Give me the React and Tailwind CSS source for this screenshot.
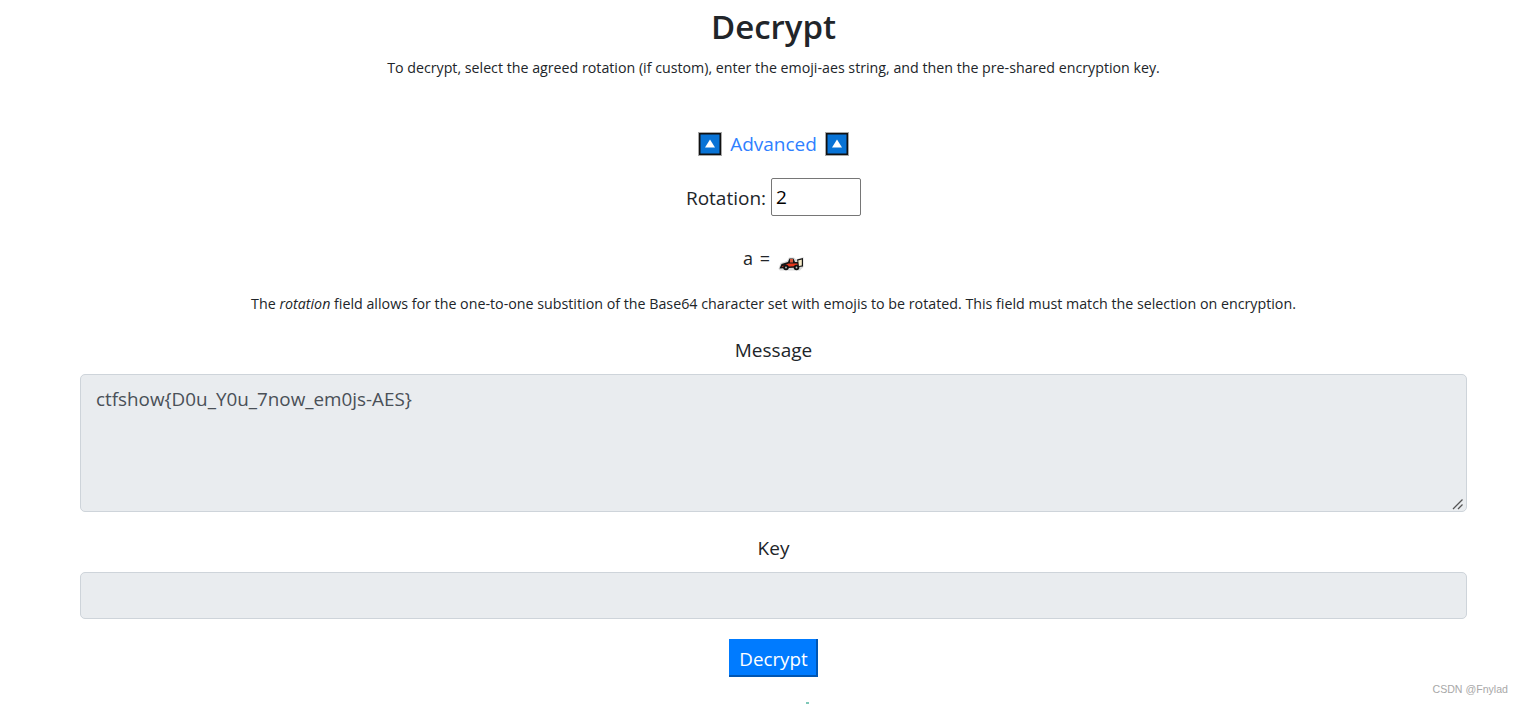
import React from 'react';

const font = "font-['Open_Sans','Noto_Sans',sans-serif]";

// blue up-arrow emoji button
const UpArrowEmoji = () => (
  <svg width="24" height="24" viewBox="0 0 24 24" className="block">
    <rect width="24" height="24" fill="#a8a8a8" />
    <rect x="1" y="1" width="22" height="22" fill="#111" />
    <rect x="2.5" y="2.5" width="19" height="19" fill="#0873d6" />
    <path d="M12 7.5 L17 15.5 L7 15.5 Z" fill="#fff" />
  </svg>
);

// racing car emoji
const RaceCar = () => (
  <svg width="26" height="16" viewBox="0 0 26 16" className="block">
    <path d="M0.5 14 L2.5 8 L9 6 L11 2.5 L16 2.5 L18 4.5 L25.5 2 L25.5 12 L22 15.5 L2 15.5 Z" fill="#d9d9d9" />
    <path d="M1.5 13.5 L3.5 9 L10 7 L11.5 3.5 L15.5 3.5 L17 7 L20 7 L20 12.5 Z" fill="#161616" />
    <path d="M4 11.5 L10.5 8.5 L19.5 8.5 L19.5 11 L4 12 Z" fill="#e8371d" />
    <rect x="12" y="4" width="3" height="3.5" fill="#d8583c" />
    <path d="M19 4.5 L25 3 L25 11.5 L20.5 12 Z" fill="#161616" />
    <path d="M20.2 5.5 L23.8 4.5 L23.8 10.5 L21 11 Z" fill="#f6ebc8" />
    <circle cx="8" cy="12.5" r="2.8" fill="#111" />
    <circle cx="18.5" cy="12.5" r="2.8" fill="#111" />
    <circle cx="8" cy="12.5" r="0.9" fill="#c4c4c4" />
    <circle cx="18.5" cy="12.5" r="0.9" fill="#c4c4c4" />
  </svg>
);

// textarea resize handle
const ResizeGrip = () => (
  <svg width="12" height="12" viewBox="0 0 12 12" className="absolute right-[3px] bottom-[2px]">
    <path d="M1 11 L10.5 1.5 M6 11 L10.5 6.5" stroke="#555" strokeWidth="1.3" fill="none" />
  </svg>
);

const App = () => {
  return (
    <div className={`relative h-[704px] overflow-hidden bg-white text-[#212529] ${font}`}>
      <div className="ml-[80px] w-[1387px] flex flex-col items-center">
        <h1 className="text-[33px] leading-[54px] font-semibold">Decrypt</h1>
        <p className="mt-[2px] text-[14.22px] leading-[24px]">
          To decrypt, select the agreed rotation (if custom), enter the emoji-aes string, and then the pre-shared encryption key.
        </p>

        <div className="mt-[50px] flex items-center gap-[8px] h-[28px]">
          <UpArrowEmoji />
          <a className="text-[19px] text-[#2f80ff]">Advanced</a>
          <UpArrowEmoji />
        </div>

        <div className="mt-[20px] flex items-center gap-[5px]">
          <label className="text-[19px] leading-[28px] translate-y-px">Rotation:</label>
          <input
            readOnly
            value="2"
            className="w-[90px] h-[38px] px-[4px] text-[19px] text-black bg-white border border-[#767676] rounded-[2px]"
          />
        </div>

        <div className="mt-[29px] flex items-center h-[26px] text-[18px] [word-spacing:2px]">
          <span>a =</span>
          <span className="ml-[8px] mt-[9px]"><RaceCar /></span>
        </div>

        <p className="mt-[21px] text-[14.25px] leading-[24px]">
          The <em>rotation</em> field allows for the one-to-one substition of the Base64 character set with emojis to be rotated. This field must match the selection on encryption.
        </p>

        <label className="mt-[20px] text-[19px] leading-[28px]">Message</label>
        <div className="relative mt-[10px] w-full">
          <textarea
            readOnly
            rows={4}
            value="ctfshow{D0u_Y0u_7now_em0js-AES}"
            className="block w-full h-[138px] px-[15px] py-[10px] text-[18.85px] leading-[28px] text-[#495057] bg-[#e9ecef] border border-[#ced4da] rounded-[5px] resize-none"
          />
          <ResizeGrip />
        </div>

        <label className="mt-[22px] text-[19px] leading-[28px]">Key</label>
        <input
          readOnly
          className="mt-[10px] block w-full h-[47px] px-[16px] text-[19px] bg-[#e9ecef] border border-[#ced4da] rounded-[5px]"
        />

        <button className="mt-[20px] h-[38px] w-[89px] pt-[3px] pl-[2px] text-[18.8px] leading-[28px] text-white bg-[#007bff] border-b-2 border-r-2 border-[#0056b3]">
          Decrypt
        </button>
      </div>

      <span className="absolute right-[15px] top-[682px] text-[10.6px] leading-[14px] text-[#a8a8a8] font-['Liberation_Sans',sans-serif]">
        CSDN @Fnylad
      </span>
      {/* tip of the next line, cut off by the window edge */}
      <span className="absolute left-[806px] top-[702px] w-[3px] h-[2px] bg-[#7fc8b8]" />
    </div>
  );
};

export default App;
